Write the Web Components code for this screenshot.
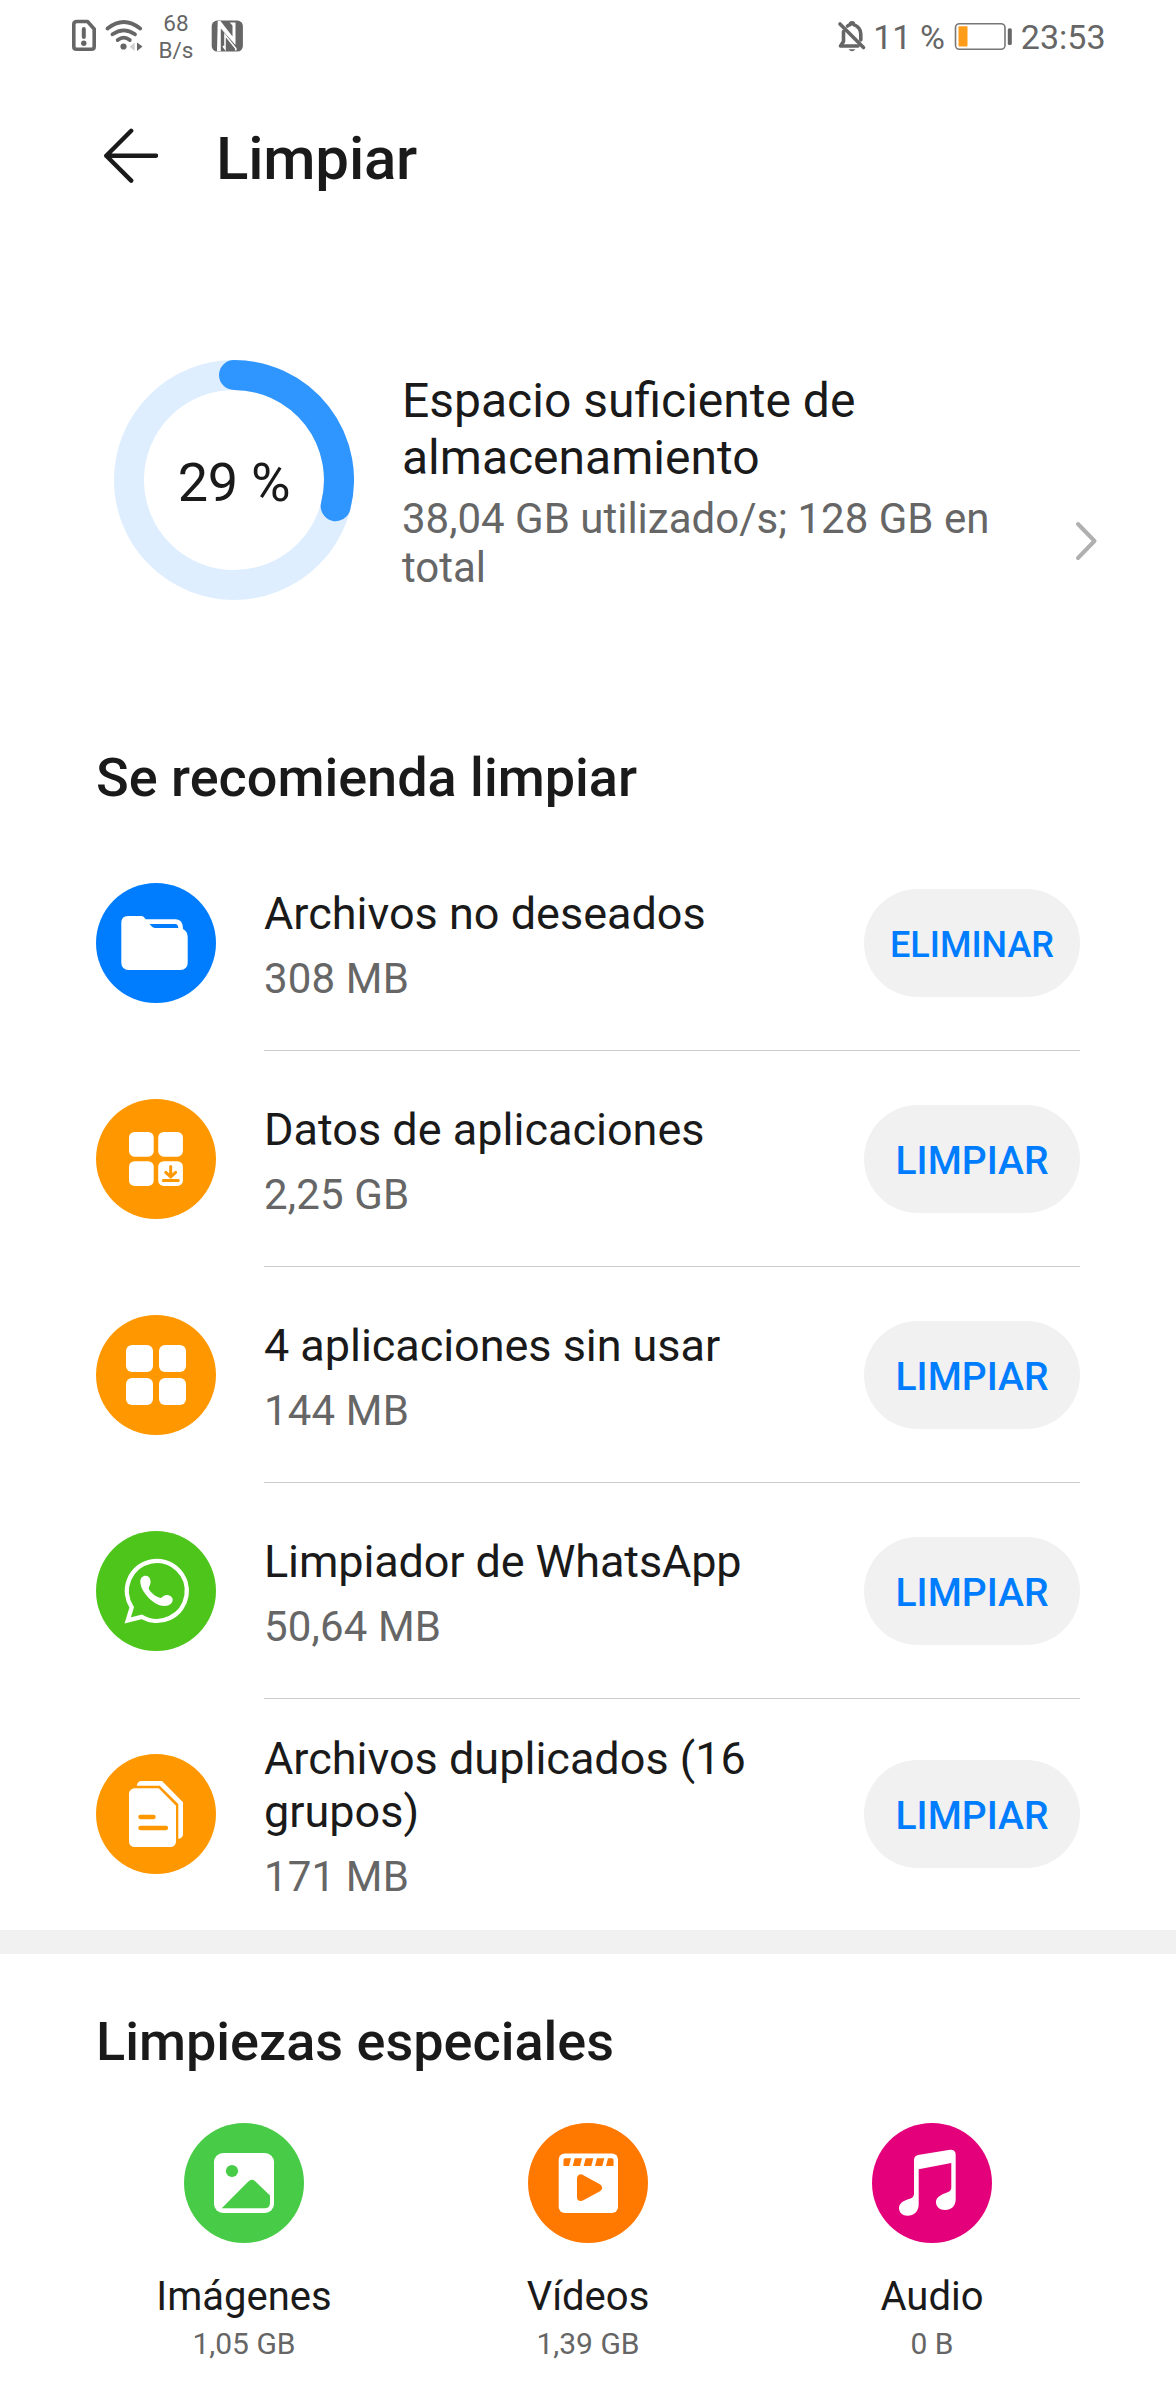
<!DOCTYPE html>
<html lang="es">
<head>
<meta charset="utf-8">
<title>Limpiar</title>
<style>
html,body{margin:0;padding:0;background:#fff}
body{width:1176px;height:2400px;overflow:hidden;font-family:Roboto,sans-serif;color:#1a1a1a}
</style>
</head>
<body>
<cleaner-app></cleaner-app>
<script>
const define = (name, css, html) => customElements.define(name, class extends HTMLElement {
  constructor() {
    super();
    this.attachShadow({mode: 'open'}).innerHTML = `<style>${css}</style>${typeof html === 'function' ? html(this) : html}`;
  }
});

const icons = {
  folder: ['#007dff', `<path fill="#fff" d="M32 33H45Q47 33 48 34.2L49.8 36.3H80Q86.8 36.5 87 46Q91.7 48.5 91.7 54V80A7 7 0 0 1 84.700 87H32.300A7 7 0 0 1 25.300 80V40Q25.300 33 32 33Z"/><path fill="#007dff" d="M53.500 41H79.500Q82 41.200 82.300 45H59Q57 45 55.800 43.600Z"/>`],
  data: ['#ff9800', `<g fill="#fff"><rect x="33" y="33" width="24.700" height="24.700" rx="5.500"/><rect x="62.200" y="33" width="24.700" height="24.700" rx="5.500"/><rect x="33" y="62.200" width="24.700" height="24.700" rx="5.500"/><rect x="62.200" y="62.200" width="24.700" height="24.700" rx="5.500"/></g><path d="M74.700 67.500V78M69.800 73.300L74.700 78L79.600 73.300M67.300 81.400H82.300" fill="none" stroke="#ff9800" stroke-width="3" stroke-linecap="round" stroke-linejoin="round"/>`],
  apps: ['#ff9800', `<g fill="#fff"><rect x="30" y="30" width="27" height="27" rx="6"/><rect x="63" y="30" width="27" height="27" rx="6"/><rect x="30" y="63" width="27" height="27" rx="6"/><rect x="63" y="63" width="27" height="27" rx="6"/></g>`],
  whatsapp: ['#4dc51b', `<path fill="none" stroke="#fff" stroke-width="4.300" d="M35.700 76.300L31.700 89.400L45.800 85.900A30 30 0 1 0 35.700 76.300Z"/><path fill="#fff" d="M49.700 44.700C53 44.700 54.700 48 54.600 51C54.500 54 52.700 55.500 52.700 57.700C54.500 61.500 60 66 65 67C66.500 66.500 67.500 64 70.300 64C73.500 64 76.700 66 76.700 68.500C76.700 72 74 75 68.500 75C58 75 44.300 61 44.300 50.500C44.300 47 46.500 44.700 49.700 44.700Z"/>`],
  docs: ['#ff9800', `<path fill="#fff" d="M38.500 34.300H62.700L80 51.700V87.500A5.500 5.500 0 0 1 74.500 93H38.500A5.500 5.500 0 0 1 33 87.500V39.800A5.500 5.500 0 0 1 38.500 34.300ZM40.700 31.700Q41.500 27 45.500 27H66L87 48.300V80Q87 84 82.300 85V50L63.700 31.700Z"/><path d="M44.400 63H57.600M44.400 74H70" stroke="#ff9800" stroke-width="4.300" stroke-linecap="round"/>`],
  image: ['#48cc48', `<rect x="30" y="30" width="60" height="60" rx="9" fill="#fff"/><circle cx="48" cy="48" r="6.100" fill="#48cc48"/><path fill="#48cc48" d="M37.700 85.300L64.300 58.500Q67.700 55.300 71.200 58.300L86 72.500V80Q86 85.300 80.500 85.300Z"/>`],
  video: ['#ff7800', `<rect x="30.700" y="30.500" width="59.300" height="59.500" rx="6" fill="#fff"/><path fill="#ff7800" d="M37 35.300H43L41 43H35.500V37Q35.500 35.300 37 35.300ZM46.700 35.300H54L52 43H44.700ZM57.700 35.300H65.300L63.300 43H55.700ZM69 35.300H76.300L74.300 43H67ZM80 35.300H84Q85.500 35.300 85.500 37V43H78Z"/><path fill="#ff7800" stroke="#ff7800" stroke-width="8" stroke-linejoin="round" d="M53 55.500V74L70 64.700Z"/>`],
  music: ['#e4007b', `<path fill="#fff" d="M46 31.900L78 26.800Q83.700 26.500 83.700 32V76C83.700 83 79.500 87 73 87C67.500 87 64 83.500 64 79C64 75.500 67 72.500 72.500 70.500C76 69.300 79.300 68.300 79.300 64.500V40L46.700 46.300V81C46.700 88.500 42 92.700 35.500 92.700C30.500 92.700 27 89.500 27 85C27 81 30.500 78 35.500 76.500C39 75.500 42 74.500 42 70.500V37Q42 32.800 46 31.900Z"/>`]
};

define('round-icon', ':host{display:block;flex:none;width:120px;height:120px}svg{display:block}', el => {
  const [color, glyph] = icons[el.getAttribute('name')];
  return `<svg width="120" height="120" viewBox="0 0 120 120"><circle cx="60" cy="60" r="60" fill="${color}"/>${glyph}</svg>`;
});

define('status-bar', `
  :host{display:flex;justify-content:space-between;box-sizing:border-box;height:72px;padding:0 70.500px 0 71px;color:#666;font-size:34px;line-height:40px}
  div{display:flex}
  svg{display:block;flex:none}
  .rate{font-size:22.5px;line-height:27px;width:36px;margin:9.500px 0 0 14.500px;text-align:center;white-space:nowrap}
  .t{padding-top:17px;white-space:nowrap}
`, `
  <div>
    <svg width="73" height="72" viewBox="71 0 73 72">
      <path fill="none" stroke="#666" stroke-width="3.600" stroke-linejoin="round" d="M77 21.500H87.500L94.200 29V46.500Q94.200 49.300 91.400 49.300H76.600Q73.800 49.300 73.800 46.500V24.300Q73.800 21.500 77 21.500Z"/>
      <path d="M83.800 29V37" stroke="#666" stroke-width="4" stroke-linecap="round"/><circle cx="83.800" cy="43.300" r="2.700" fill="#666"/>
      <g fill="none" stroke="#666" stroke-width="3.800" stroke-linecap="round"><path d="M107.500 28.500Q123.800 15.500 140.200 28.500M112.500 34.300Q123.800 26.500 135 34.300M117.700 40Q123.800 35.300 129.800 40"/></g>
      <circle cx="123.500" cy="46.500" r="3.100" fill="#666"/>
      <path d="M134.700 42.500V51L129.500 46.700Z" fill="#d0d0d0"/><path d="M137 42.500V51L142.500 46.500Z" fill="#666"/>
    </svg>
    <div class="rate"><span>68<br>B/s</span></div>
    <svg style="margin-left:16.500px" width="32" height="72" viewBox="211 0 32 72">
      <rect x="211.700" y="20.600" width="31.200" height="31" rx="5.500" fill="#666"/>
      <path fill="#fff" d="M217.700 21H220.500L232.500 36.500V25.500L229.700 22.500L235.500 22.500V45L220.800 28.500V51.300H217Z"/>
      <path fill="none" stroke="#fff" stroke-width="1.600" d="M223 46L225 48.800V35L235.800 48.500V50.500"/>
    </svg>
  </div>
  <div>
    <svg width="36" height="72" viewBox="838 0 36 72">
      <g fill="none" stroke="#666" stroke-width="3.600" stroke-linecap="round" stroke-linejoin="round"><path d="M844.500 31.500V41.500L841.500 46H859M848.500 26Q850 24.700 851.200 24.700Q851.200 22.700 853 22.700Q854.800 22.700 854.800 24.700Q861.800 27.500 861.800 34V40"/><path d="M841 24L864.500 47.500"/></g>
      <path d="M849.500 49.300H856.500Q855 51.300 853 51.300Q851 51.300 849.500 49.300Z" fill="#666"/>
    </svg>
    <span class="t">11 %</span>
    <svg style="margin-left:9px" width="60" height="72" viewBox="953.500 0 60 72">
      <rect x="955" y="23.700" width="49.500" height="25.600" rx="4" fill="none" stroke="#777" stroke-width="1.600"/>
      <rect x="958" y="26.300" width="9" height="20.300" rx="1" fill="#ff9c1a"/><rect x="1007.300" y="28.300" width="4" height="16.700" rx="1.600" fill="#666"/>
    </svg>
    <span class="t" style="margin-left:7px">23:53</span>
  </div>
`);

define('title-bar', `
  :host{display:flex;align-items:flex-start;height:168px;padding-left:102px}
  svg{display:block;margin-top:54px}
  h1{margin:51.500px 0 0 58px;font-size:60px;line-height:70px;font-weight:500;letter-spacing:-.2px}
`, `<svg width="56" height="60" viewBox="102 126 56 60"><path d="M131.200 130.800L106.300 155.700L131.200 180.600M106.300 155.700H156" fill="none" stroke="#1a1a1a" stroke-width="4.400" stroke-linecap="round" stroke-linejoin="round"/></svg><h1><slot></slot></h1>`);

define('usage-ring', `
  :host{display:grid;flex:none;width:240px;height:240px;place-items:center}
  svg,span{grid-area:1/1}
  span{font-size:54px;line-height:64px;padding-top:5px;letter-spacing:-.3px;white-space:nowrap}
`, `<svg width="240" height="240" viewBox="0 0 240 240"><circle cx="120" cy="120" r="105" fill="none" stroke="#dfeeff" stroke-width="30"/><path d="M120 15A105 105 0 0 1 221.700 146.100" fill="none" stroke="#2f95ff" stroke-width="30" stroke-linecap="round"/></svg><span><slot></slot></span>`);

define('storage-summary', `
  :host{display:flex;box-sizing:border-box;height:506px;padding:120px 78px 0 114px}
  .text{width:620px;margin:12px 0 0 48px}
  .head{font-size:48px;line-height:57px}
  .sub{margin-top:8px;font-size:42px;line-height:49px;color:#666}
  .chev{display:block;margin:159px 0 0 auto}
`, `<usage-ring>29 %</usage-ring>
  <div class="text"><div class="head"><slot name="head"></slot></div><div class="sub"><slot name="sub"></slot></div></div>
  <svg class="chev" width="24" height="44" viewBox="0 0 24 44"><path d="M4 5L20.500 22L4 39" fill="none" stroke="#b0b0b0" stroke-width="4" stroke-linecap="round" stroke-linejoin="round"/></svg>`);

define('section-title', ':host{display:block;padding-left:96px;font-size:54px;line-height:63px;font-weight:500}', '<slot></slot>');

define('pill-button', `
  :host{display:block;flex:none}
  button{display:flex;align-items:center;justify-content:center;box-sizing:border-box;width:216px;height:108px;padding:4px 0 0;border:0;border-radius:54px;background:#f1f1f1;color:#007dff;font:500 var(--pill-size,39px)/46px Roboto,sans-serif}
`, '<button><slot></slot></button>');

define('clean-row', `
  :host{display:flex;align-items:center;height:216px;padding:0 96px}
  .main{display:flex;align-items:center;justify-content:space-between;flex:1;height:100%;margin-left:48px;box-shadow:inset 0 -1px #ccc}
  :host([last]){height:230px}
  :host([last]) .main{box-shadow:none}
  .text{padding-top:4px;width:540px}
  :host([last]) .text{padding-top:5px}
  .name{font-size:45px;line-height:53px;letter-spacing:var(--name-spacing,0)}
  .size{margin-top:14px;font-size:42px;line-height:49px;letter-spacing:.15px;color:#666}
`, el => `<round-icon name="${el.getAttribute('icon')}"></round-icon>
  <div class="main"><div class="text"><div class="name"><slot></slot></div><div class="size"><slot name="size"></slot></div></div>
  <pill-button><slot name="action"></slot></pill-button></div>`);

define('media-tile', `
  :host{display:flex;flex-direction:column;align-items:center;width:344px}
  .name{margin-top:30px;font-size:40px;line-height:47px}
  .size{margin-top:6px;font-size:30px;line-height:35px;color:#666}
`, el => `<round-icon name="${el.getAttribute('icon')}"></round-icon><div class="name"><slot></slot></div><div class="size"><slot name="size"></slot></div>`);

define('cleaner-app', `
  :host{display:block;width:1176px}
  .list{margin-top:26px;padding-bottom:1px}
  .band{height:24px;background:#f1f1f1;margin-bottom:56px}
  .tiles{display:flex;margin:50px 72px 0}
`, `
  <status-bar></status-bar>
  <title-bar>Limpiar</title-bar>
  <storage-summary><span slot="head">Espacio suficiente de almacenamiento</span><span slot="sub">38,04 GB utilizado/s; 128 GB en total</span></storage-summary>
  <section-title>Se recomienda limpiar</section-title>
  <div class="list">
    <clean-row icon="folder" style="--pill-size:36px">Archivos no deseados<span slot="size">308 MB</span><span slot="action">ELIMINAR</span></clean-row>
    <clean-row icon="data">Datos de aplicaciones<span slot="size">2,25 GB</span><span slot="action">LIMPIAR</span></clean-row>
    <clean-row icon="apps" style="--name-spacing:-.05px">4 aplicaciones sin usar<span slot="size">144 MB</span><span slot="action">LIMPIAR</span></clean-row>
    <clean-row icon="whatsapp" style="--name-spacing:-.13px">Limpiador de WhatsApp<span slot="size">50,64 MB</span><span slot="action">LIMPIAR</span></clean-row>
    <clean-row icon="docs" last>Archivos duplicados (16 grupos)<span slot="size">171 MB</span><span slot="action">LIMPIAR</span></clean-row>
  </div>
  <div class="band"></div>
  <section-title>Limpiezas especiales</section-title>
  <div class="tiles">
    <media-tile icon="image">Imágenes<span slot="size">1,05 GB</span></media-tile>
    <media-tile icon="video">Vídeos<span slot="size">1,39 GB</span></media-tile>
    <media-tile icon="music">Audio<span slot="size">0 B</span></media-tile>
  </div>
`);
</script>
</body>
</html>
